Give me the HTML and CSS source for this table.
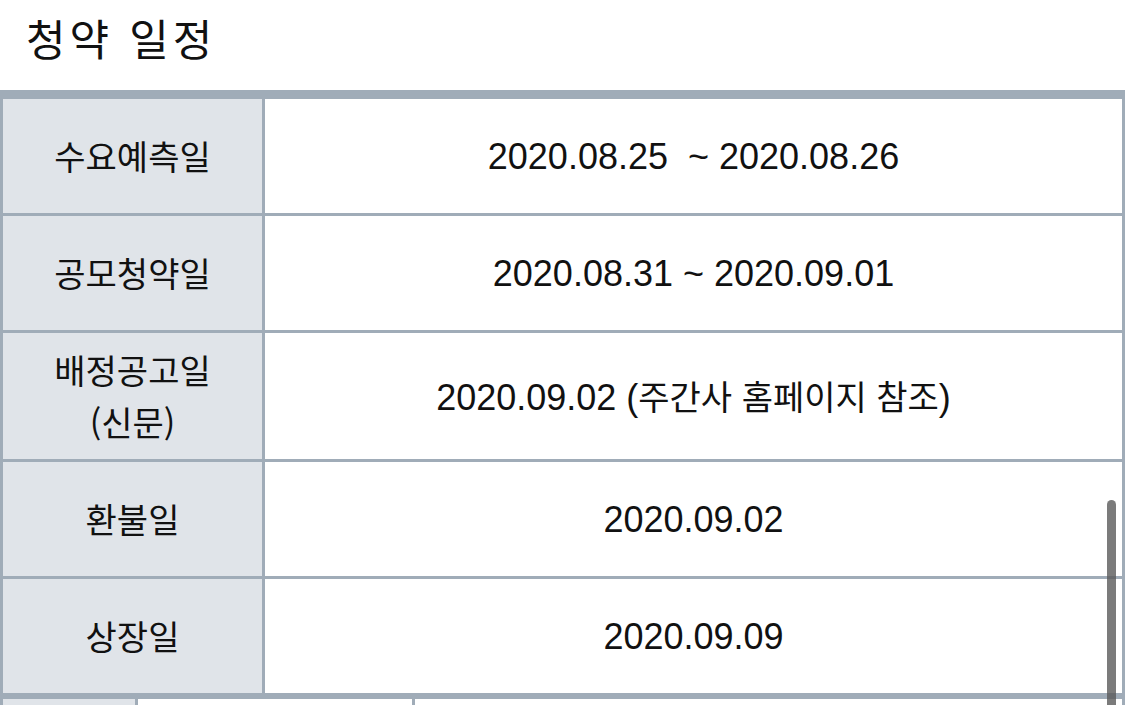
FILE: index.html
```html
<!DOCTYPE html>
<html lang="ko">
<head>
<meta charset="utf-8">
<title>청약 일정</title>
<link rel="stylesheet" href="styles.css">
</head>
<body>
<div class="page">
  <h2 class="title">청약 일정</h2>
  <table class="schedule">
    <tbody>
      <tr>
        <th>수요예측일</th>
        <td>2020.08.25&nbsp; ~ 2020.08.26</td>
      </tr>
      <tr>
        <th>공모청약일</th>
        <td>2020.08.31 ~ 2020.09.01</td>
      </tr>
      <tr>
        <th>배정공고일<br>(신문)</th>
        <td>2020.09.02 (<span class="ko">주간사 홈페이지 참조</span>)</td>
      </tr>
      <tr>
        <th>환불일</th>
        <td>2020.09.02</td>
      </tr>
      <tr>
        <th>상장일</th>
        <td>2020.09.09</td>
      </tr>
    </tbody>
  </table>
  <table class="next">
    <tbody>
      <tr>
        <th class="c1"></th>
        <td class="c2"></td>
        <td class="c3"></td>
      </tr>
    </tbody>
  </table>
</div>
<div class="scrollbar"></div>
</body>
</html>
```

FILE: styles.css
```css
html, body {
  margin: 0;
  padding: 0;
  overflow: hidden;
  background: #ffffff;
  height: 705px;
}

.page {
  width: 1125px;
}

.title {
  margin: 0;
  height: 90px;
  box-sizing: border-box;
  padding: 9px 0 0 26px;
  font-family: "Noto Sans CJK KR", sans-serif;
  font-size: 43px;
  font-weight: 400;
  line-height: 56px;
  letter-spacing: 4px;
  color: #111111;
}

.schedule {
  width: 1125px;
  border-collapse: separate;
  border-spacing: 0;
  border-top: 9px solid #a0acb8;
  border-left: 3px solid #a0acb8;
  border-right: 3px solid #a0acb8;
  table-layout: fixed;
}

.schedule th,
.schedule td {
  height: 92px;
  padding: 12px 0 10px;
  border-bottom: 3px solid #a0acb8;
  text-align: center;
  vertical-align: middle;
  color: #111111;
  line-height: 52px;
}

.schedule th {
  width: 259px;
  background: #e0e4e9;
  border-right: 3px solid #a0acb8;
  font-family: "Noto Sans CJK KR", sans-serif;
  font-size: 34px;
  font-weight: 400;
  padding-top: 11px;
  padding-bottom: 11px;
}

.schedule td {
  background: #ffffff;
  font-family: "Liberation Sans", "Noto Sans CJK KR", sans-serif;
  font-size: 36px;
}

.schedule td .ko {
  font-family: "Noto Sans CJK KR", sans-serif;
  font-size: 34px;
}

.next {
  width: 1125px;
  border-collapse: separate;
  border-spacing: 0;
  border-top: 3px solid #a0acb8;
  border-left: 3px solid #a0acb8;
  border-right: 3px solid #a0acb8;
  table-layout: fixed;
}

.next th,
.next td {
  height: 60px;
  padding: 0;
}

.next .c1 {
  width: 132px;
  background: #e0e4e9;
  border-right: 3px solid #a0acb8;
}

.next .c2 {
  width: 274px;
  background: #ffffff;
  border-right: 3px solid #a0acb8;
}

.next .c3 {
  background: #ffffff;
}

.scrollbar {
  position: fixed;
  left: 1107px;
  top: 500px;
  width: 9px;
  height: 220px;
  border-radius: 5px;
  background: rgba(90, 90, 90, 0.8);
}
```
